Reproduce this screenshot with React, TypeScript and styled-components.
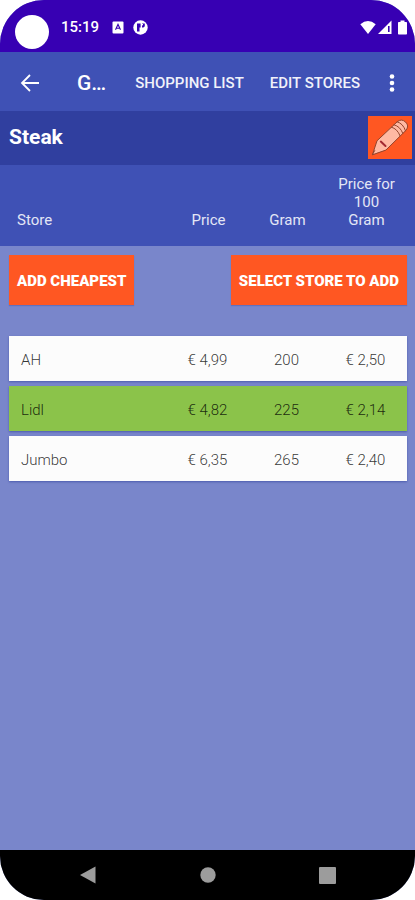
import React from "react";
import styled, { createGlobalStyle } from "styled-components";

const GlobalStyle = createGlobalStyle`
  * { box-sizing: border-box; }
  body { margin: 0; background: #fff; font-family: Roboto, "Liberation Sans", sans-serif; }
  button { font-family: inherit; border: 0; margin: 0; padding: 0; cursor: pointer; }
`;

const Screen = styled.div`
  display: flex;
  flex-direction: column;
  min-height: 100vh;
  overflow: hidden;
  border-radius: 44px;
  background: #7986cb;
`;

const StatusBar = styled.div`
  display: flex;
  align-items: center;
  height: 52px;
  padding: 2px 7px 0 15px;
  background: #3700b3;
  color: #fff;
`;

const Camera = styled.span`
  width: 34px;
  height: 34px;
  margin-top: 10px;
  border-radius: 50%;
  background: #fff;
`;

const Clock = styled.time`
  margin: 0 13px 0 12px;
  font-size: 15px;
  line-height: 20px;
  font-weight: 500;
`;

const Notifications = styled.div`
  display: flex;
  align-items: center;
  gap: 9px;
  flex: 1;
`;

const Indicators = styled.div`
  display: flex;
  align-items: center;
  gap: 2px;
`;

const AppBar = styled.header`
  display: flex;
  align-items: center;
  height: 59px;
  padding: 2px 8px 0 15px;
  background: #3f51b5;
  color: #fff;
`;

const IconButton = styled.button`
  display: grid;
  place-items: center;
  width: 30px;
  height: 40px;
  background: none;
  color: #fff;
`;

const AppTitle = styled.h1`
  flex: 1;
  margin: 0 0 0 32px;
  font-size: 21px;
  line-height: 28px;
  font-weight: 500;
  white-space: nowrap;
`;

const Menu = styled.nav`
  display: flex;
  gap: 26px;
  margin-right: 17px;
`;

const MenuButton = styled.button`
  background: none;
  color: #f1f2fa;
  font-size: 15px;
  line-height: 20px;
  font-weight: 500;
  white-space: nowrap;
`;

const ProductBar = styled.div`
  display: flex;
  align-items: center;
  justify-content: space-between;
  height: 54px;
  padding: 0 3px 2px 9px;
  background: #303f9f;
`;

const ProductName = styled.h2`
  margin: 0;
  color: #fff;
  font-size: 21px;
  line-height: 28px;
  font-weight: 700;
`;

const EditButton = styled.button`
  width: 44px;
  height: 43px;
  background: #ff5722;

  svg { display: block; }
`;

const PriceTable = styled.table`
  display: block;
  flex: 1;
`;

const Head = styled.thead`
  display: block;
  background: #3f51b5;
`;

const HeadRow = styled.tr`
  display: grid;
  grid-template-columns: 1fr repeat(3, 79px);
  align-items: end;
  min-height: 81px;
  padding: 10px 9px 17px 17px;
`;

const HeadCell = styled.th<{ $align?: "left" }>`
  padding: ${(p) => (p.$align ? "0" : "0 9px")};
  color: #e3e6f5;
  font-size: 15px;
  line-height: 18px;
  font-weight: 400;
  text-align: ${(p) => p.$align ?? "center"};
`;

const Body = styled.tbody`
  display: grid;
  gap: 5px;
  padding: 9px 8px 9px 9px;
`;

const ActionRow = styled.tr`
  display: block;
  margin-bottom: 26px;
`;

const ActionCell = styled.td`
  display: flex;
  justify-content: space-between;
  padding: 0;
`;

const ActionButton = styled.button`
  height: 50px;
  padding: 2px 8px 0;
  background: #ff5722;
  box-shadow: 0 1px 1px rgba(48, 63, 159, 0.3);
  color: #fff;
  font-size: 15px;
  line-height: 20px;
  font-weight: 900;
  white-space: nowrap;
`;

const StoreRow = styled.tr<{ $cheapest: boolean }>`
  display: grid;
  grid-template-columns: 1fr repeat(3, 79px);
  align-items: center;
  height: 45px;
  padding: 2px 2px 0 12px;
  background: ${(p) => (p.$cheapest ? "#8bc34a" : "#fcfcfc")};
  box-shadow: 0 1px 2px #4c5cae;
`;

const Cell = styled.td<{ $align?: "left" }>`
  padding: 0;
  color: rgba(0, 0, 0, 0.8);
  font-size: 15px;
  line-height: 20px;
  font-weight: 300;
  text-align: ${(p) => p.$align ?? "center"};
`;

const NavBar = styled.nav`
  display: flex;
  align-items: center;
  justify-content: center;
  gap: 90px;
  height: 50px;
  background: #000;
  color: #9c9c9c;
`;

const stores = [
  { name: "AH", price: "€ 4,99", gram: "200", per100: "€ 2,50" },
  { name: "Lidl", price: "€ 4,82", gram: "225", per100: "€ 2,14", cheapest: true },
  { name: "Jumbo", price: "€ 6,35", gram: "265", per100: "€ 2,40" },
];

const KeyboardIcon = () => (
  <svg width="12" height="13" viewBox="0 0 12 13" aria-hidden="true">
    <rect x=".5" y=".5" width="11" height="12" rx="1" fill="#fff" />
    <path d="M3.500 8.800 6 3.400l2.500 5.400M4.500 7.200h3" fill="none" stroke="#3700b3" strokeWidth="1.100" />
  </svg>
);

const BadgeIcon = () => (
  <svg width="15" height="15" viewBox="0 0 15 15" aria-hidden="true">
    <circle cx="7.500" cy="7.500" r="7.200" fill="#fff" />
    <path d="M4 3.400h3.600v4.200H6.500v4H4z" fill="#3700b3" />
    <path d="M9 3.400h2.800v2.200q0 2-2.800 2z" fill="#3700b3" />
    <circle cx="9.200" cy="4.600" r=".9" fill="#fff" />
  </svg>
);

const WifiIcon = () => (
  <svg width="16" height="15" viewBox="0 0 16 15" aria-hidden="true">
    <path d="M.3 4.300Q8-2.500 15.700 4.300L8 14z" fill="#fff" />
  </svg>
);

const SignalIcon = () => (
  <svg width="15" height="15" viewBox="0 0 15 15" aria-hidden="true">
    <path d="M0 14 13.500.5V14z" fill="#fff" />
    <path d="M10 6h1.600v6H10z" fill="#3700b3" />
  </svg>
);

const BatteryIcon = () => (
  <svg width="13" height="15" viewBox="0 0 13 15" aria-hidden="true">
    <path d="M5.500 2V.5h4V2h1.700q.8 0 .8.800v10.900q0 .8-.8.800H3.800q-.8 0-.8-.8V2.800Q3 2 3.800 2z" fill="#fff" />
  </svg>
);

const PencilIcon = () => (
  <svg width="44" height="43" viewBox="0 0 44 43" aria-hidden="true">
    <g stroke="#94452c" strokeWidth="1" strokeLinejoin="round" strokeLinecap="round">
      <path d="M4.500 38.500 9 24.800 29.200 5.800Q33.500 2.300 37.500 6T38 14.300L18.200 33.800z" fill="#ffb9a3" />
      <path d="M4.500 38.500l2.200-3.900M26 8.800q6.200 1.500 8.800 8.500M23.500 11.200q5.800 1.500 8.500 8.500M29.200 5.800q6 1.700 8.300 9" fill="none" />
      <path d="m12.800 25.600 4.700 4.400" stroke="#a32a32" strokeWidth="2" />
    </g>
  </svg>
);

export default function App() {
  return (
    <>
      <GlobalStyle />
      <Screen>
        <StatusBar>
          <Camera />
          <Clock>15:19</Clock>
          <Notifications>
            <KeyboardIcon />
            <BadgeIcon />
          </Notifications>
          <Indicators>
            <WifiIcon />
            <SignalIcon />
            <BatteryIcon />
          </Indicators>
        </StatusBar>

        <AppBar>
          <IconButton aria-label="Back">
            <svg width="20" height="20" viewBox="0 0 20 20" fill="none" stroke="currentColor" strokeWidth="1.8">
              <path d="M19 10H2.500M10 2 2 10l8 8" />
            </svg>
          </IconButton>
          <AppTitle>G…</AppTitle>
          <Menu>
            <MenuButton>SHOPPING LIST</MenuButton>
            <MenuButton>EDIT STORES</MenuButton>
          </Menu>
          <IconButton aria-label="More options">
            <svg width="6" height="20" viewBox="0 0 6 20" fill="currentColor">
              <circle cx="3" cy="3.500" r="2.300" />
              <circle cx="3" cy="10" r="2.300" />
              <circle cx="3" cy="16.500" r="2.300" />
            </svg>
          </IconButton>
        </AppBar>

        <ProductBar>
          <ProductName>Steak</ProductName>
          <EditButton aria-label="Edit product">
            <PencilIcon />
          </EditButton>
        </ProductBar>

        <PriceTable>
          <Head>
            <HeadRow>
              <HeadCell scope="col" $align="left">Store</HeadCell>
              <HeadCell scope="col">Price</HeadCell>
              <HeadCell scope="col">Gram</HeadCell>
              <HeadCell scope="col">Price for 100 Gram</HeadCell>
            </HeadRow>
          </Head>
          <Body>
            <ActionRow>
              <ActionCell colSpan={4}>
                <ActionButton>ADD CHEAPEST</ActionButton>
                <ActionButton>SELECT STORE TO ADD</ActionButton>
              </ActionCell>
            </ActionRow>
            {stores.map((store) => (
              <StoreRow key={store.name} $cheapest={Boolean(store.cheapest)}>
                <Cell $align="left">{store.name}</Cell>
                <Cell>{store.price}</Cell>
                <Cell>{store.gram}</Cell>
                <Cell>{store.per100}</Cell>
              </StoreRow>
            ))}
          </Body>
        </PriceTable>

        <NavBar>
          <IconButton aria-label="System back">
            <svg width="16" height="18" viewBox="0 0 16 18">
              <path d="M0 9 15.500.5v17z" fill="#9c9c9c" />
            </svg>
          </IconButton>
          <IconButton aria-label="Home">
            <svg width="16" height="16" viewBox="0 0 16 16">
              <circle cx="8" cy="8" r="7.700" fill="#9c9c9c" />
            </svg>
          </IconButton>
          <IconButton aria-label="Recent apps">
            <svg width="17" height="17" viewBox="0 0 17 17">
              <rect width="17" height="17" rx="1" fill="#9c9c9c" />
            </svg>
          </IconButton>
        </NavBar>
      </Screen>
    </>
  );
}
